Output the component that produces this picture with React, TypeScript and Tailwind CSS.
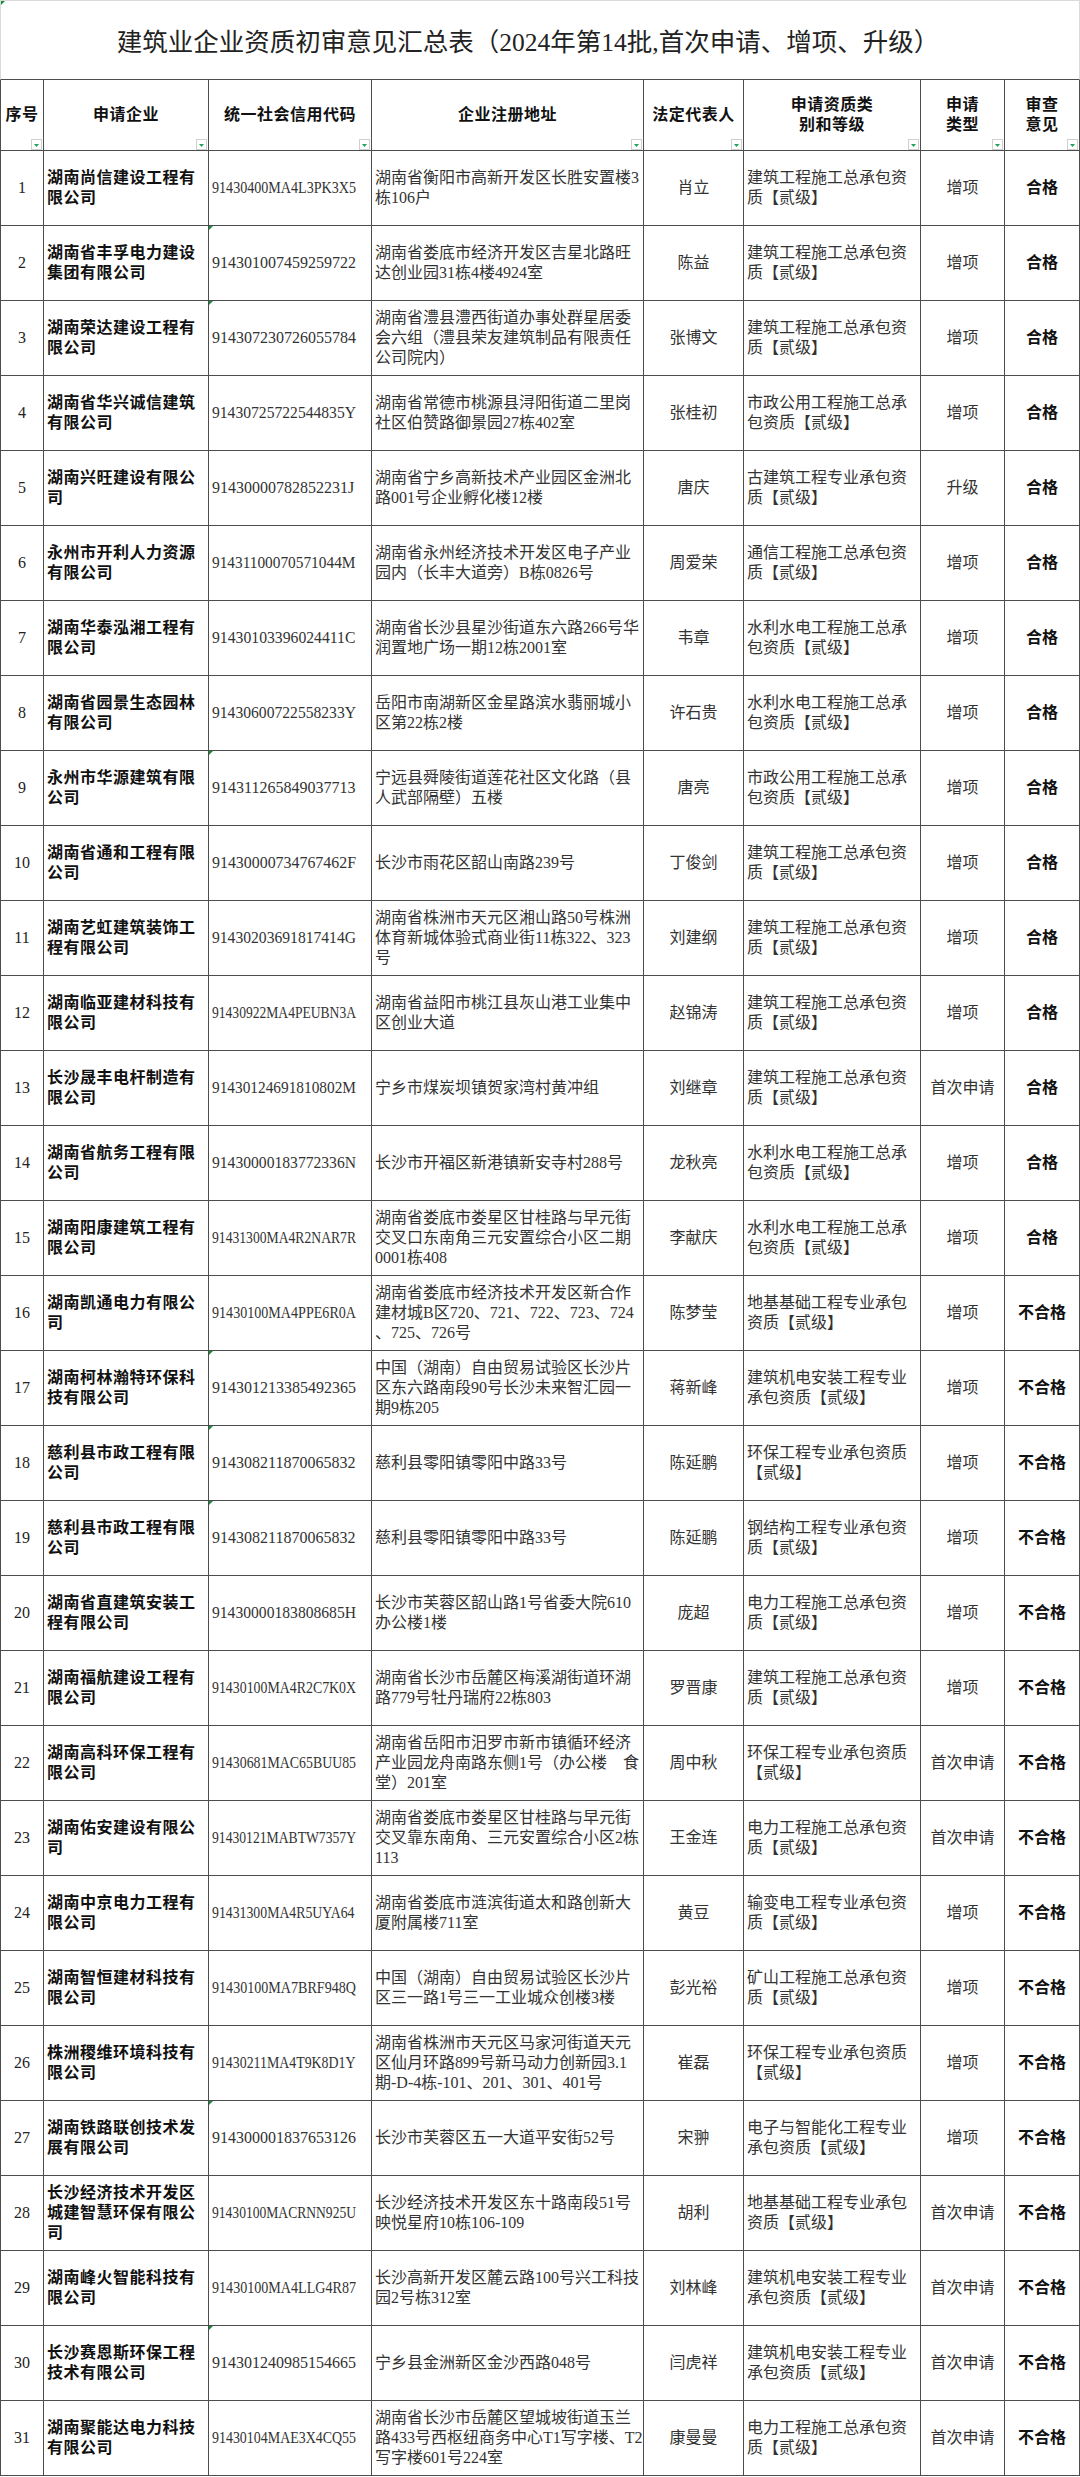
import React from "react";

type Row = {
  name: string;
  code: string;
  addr: string;
  rep: string;
  qual: string;
  type: string;
  result: string;
};

// lines are split on "|" so wrapping matches the sheet
const rows: Row[] = [
  { name: "湖南尚信建设工程有|限公司", code: "91430400MA4L3PK3X5", addr: "湖南省衡阳市高新开发区长胜安置楼3|栋106户", rep: "肖立", qual: "建筑工程施工总承包资|质【贰级】", type: "增项", result: "合格" },
  { name: "湖南省丰孚电力建设|集团有限公司", code: "914301007459259722", addr: "湖南省娄底市经济开发区吉星北路旺|达创业园31栋4楼4924室", rep: "陈益", qual: "建筑工程施工总承包资|质【贰级】", type: "增项", result: "合格" },
  { name: "湖南荣达建设工程有|限公司", code: "914307230726055784", addr: "湖南省澧县澧西街道办事处群星居委|会六组（澧县荣友建筑制品有限责任|公司院内）", rep: "张博文", qual: "建筑工程施工总承包资|质【贰级】", type: "增项", result: "合格" },
  { name: "湖南省华兴诚信建筑|有限公司", code: "91430725722544835Y", addr: "湖南省常德市桃源县浔阳街道二里岗|社区伯赞路御景园27栋402室", rep: "张桂初", qual: "市政公用工程施工总承|包资质【贰级】", type: "增项", result: "合格" },
  { name: "湖南兴旺建设有限公|司", code: "91430000782852231J", addr: "湖南省宁乡高新技术产业园区金洲北|路001号企业孵化楼12楼", rep: "唐庆", qual: "古建筑工程专业承包资|质【贰级】", type: "升级", result: "合格" },
  { name: "永州市开利人力资源|有限公司", code: "91431100070571044M", addr: "湖南省永州经济技术开发区电子产业|园内（长丰大道旁）B栋0826号", rep: "周爱荣", qual: "通信工程施工总承包资|质【贰级】", type: "增项", result: "合格" },
  { name: "湖南华泰泓湘工程有|限公司", code: "91430103396024411C", addr: "湖南省长沙县星沙街道东六路266号华|润置地广场一期12栋2001室", rep: "韦章", qual: "水利水电工程施工总承|包资质【贰级】", type: "增项", result: "合格" },
  { name: "湖南省园景生态园林|有限公司", code: "91430600722558233Y", addr: "岳阳市南湖新区金星路滨水翡丽城小|区第22栋2楼", rep: "许石贵", qual: "水利水电工程施工总承|包资质【贰级】", type: "增项", result: "合格" },
  { name: "永州市华源建筑有限|公司", code: "914311265849037713", addr: "宁远县舜陵街道莲花社区文化路（县|人武部隔壁）五楼", rep: "唐亮", qual: "市政公用工程施工总承|包资质【贰级】", type: "增项", result: "合格" },
  { name: "湖南省通和工程有限|公司", code: "91430000734767462F", addr: "长沙市雨花区韶山南路239号", rep: "丁俊剑", qual: "建筑工程施工总承包资|质【贰级】", type: "增项", result: "合格" },
  { name: "湖南艺虹建筑装饰工|程有限公司", code: "91430203691817414G", addr: "湖南省株洲市天元区湘山路50号株洲|体育新城体验式商业街11栋322、323|号", rep: "刘建纲", qual: "建筑工程施工总承包资|质【贰级】", type: "增项", result: "合格" },
  { name: "湖南临亚建材科技有|限公司", code: "91430922MA4PEUBN3A", addr: "湖南省益阳市桃江县灰山港工业集中|区创业大道", rep: "赵锦涛", qual: "建筑工程施工总承包资|质【贰级】", type: "增项", result: "合格" },
  { name: "长沙晟丰电杆制造有|限公司", code: "91430124691810802M", addr: "宁乡市煤炭坝镇贺家湾村黄冲组", rep: "刘继章", qual: "建筑工程施工总承包资|质【贰级】", type: "首次申请", result: "合格" },
  { name: "湖南省航务工程有限|公司", code: "91430000183772336N", addr: "长沙市开福区新港镇新安寺村288号", rep: "龙秋亮", qual: "水利水电工程施工总承|包资质【贰级】", type: "增项", result: "合格" },
  { name: "湖南阳康建筑工程有|限公司", code: "91431300MA4R2NAR7R", addr: "湖南省娄底市娄星区甘桂路与早元街|交叉口东南角三元安置综合小区二期|0001栋408", rep: "李献庆", qual: "水利水电工程施工总承|包资质【贰级】", type: "增项", result: "合格" },
  { name: "湖南凯通电力有限公|司", code: "91430100MA4PPE6R0A", addr: "湖南省娄底市经济技术开发区新合作|建材城B区720、721、722、723、724|、725、726号", rep: "陈梦莹", qual: "地基基础工程专业承包|资质【贰级】", type: "增项", result: "不合格" },
  { name: "湖南柯林瀚特环保科|技有限公司", code: "914301213385492365", addr: "中国（湖南）自由贸易试验区长沙片|区东六路南段90号长沙未来智汇园一|期9栋205", rep: "蒋新峰", qual: "建筑机电安装工程专业|承包资质【贰级】", type: "增项", result: "不合格" },
  { name: "慈利县市政工程有限|公司", code: "914308211870065832", addr: "慈利县零阳镇零阳中路33号", rep: "陈延鹏", qual: "环保工程专业承包资质|【贰级】", type: "增项", result: "不合格" },
  { name: "慈利县市政工程有限|公司", code: "914308211870065832", addr: "慈利县零阳镇零阳中路33号", rep: "陈延鹏", qual: "钢结构工程专业承包资|质【贰级】", type: "增项", result: "不合格" },
  { name: "湖南省直建筑安装工|程有限公司", code: "91430000183808685H", addr: "长沙市芙蓉区韶山路1号省委大院610|办公楼1楼", rep: "庞超", qual: "电力工程施工总承包资|质【贰级】", type: "增项", result: "不合格" },
  { name: "湖南福航建设工程有|限公司", code: "91430100MA4R2C7K0X", addr: "湖南省长沙市岳麓区梅溪湖街道环湖|路779号牡丹瑞府22栋803", rep: "罗晋康", qual: "建筑工程施工总承包资|质【贰级】", type: "增项", result: "不合格" },
  { name: "湖南高科环保工程有|限公司", code: "91430681MAC65BUU85", addr: "湖南省岳阳市汨罗市新市镇循环经济|产业园龙舟南路东侧1号（办公楼\u3000食|堂）201室", rep: "周中秋", qual: "环保工程专业承包资质|【贰级】", type: "首次申请", result: "不合格" },
  { name: "湖南佑安建设有限公|司", code: "91430121MABTW7357Y", addr: "湖南省娄底市娄星区甘桂路与早元街|交叉靠东南角、三元安置综合小区2栋|113", rep: "王金连", qual: "电力工程施工总承包资|质【贰级】", type: "首次申请", result: "不合格" },
  { name: "湖南中京电力工程有|限公司", code: "91431300MA4R5UYA64", addr: "湖南省娄底市涟滨街道太和路创新大|厦附属楼711室", rep: "黄豆", qual: "输变电工程专业承包资|质【贰级】", type: "增项", result: "不合格" },
  { name: "湖南智恒建材科技有|限公司", code: "91430100MA7BRF948Q", addr: "中国（湖南）自由贸易试验区长沙片|区三一路1号三一工业城众创楼3楼", rep: "彭光裕", qual: "矿山工程施工总承包资|质【贰级】", type: "增项", result: "不合格" },
  { name: "株洲稷维环境科技有|限公司", code: "91430211MA4T9K8D1Y", addr: "湖南省株洲市天元区马家河街道天元|区仙月环路899号新马动力创新园3.1|期-D-4栋-101、201、301、401号", rep: "崔磊", qual: "环保工程专业承包资质|【贰级】", type: "增项", result: "不合格" },
  { name: "湖南铁路联创技术发|展有限公司", code: "914300001837653126", addr: "长沙市芙蓉区五一大道平安街52号", rep: "宋翀", qual: "电子与智能化工程专业|承包资质【贰级】", type: "增项", result: "不合格" },
  { name: "长沙经济技术开发区|城建智慧环保有限公|司", code: "91430100MACRNN925U", addr: "长沙经济技术开发区东十路南段51号|映悦星府10栋106-109", rep: "胡利", qual: "地基基础工程专业承包|资质【贰级】", type: "首次申请", result: "不合格" },
  { name: "湖南峰火智能科技有|限公司", code: "91430100MA4LLG4R87", addr: "长沙高新开发区麓云路100号兴工科技|园2号栋312室", rep: "刘林峰", qual: "建筑机电安装工程专业|承包资质【贰级】", type: "首次申请", result: "不合格" },
  { name: "长沙赛恩斯环保工程|技术有限公司", code: "914301240985154665", addr: "宁乡县金洲新区金沙西路048号", rep: "闫虎祥", qual: "建筑机电安装工程专业|承包资质【贰级】", type: "首次申请", result: "不合格" },
  { name: "湖南聚能达电力科技|有限公司", code: "91430104MAE3X4CQ55", addr: "湖南省长沙市岳麓区望城坡街道玉兰|路433号西枢纽商务中心T1写字楼、T2|写字楼601号224室", rep: "康曼曼", qual: "电力工程施工总承包资|质【贰级】", type: "首次申请", result: "不合格" },
];

const cols = "grid grid-cols-[44px_165px_163px_272px_100px_177px_84px_75px]";
const cell = "relative flex items-center border-r border-b border-[#4d4d4d] px-[3px] leading-[20px]";

// Times metrics, per 1000 em, used to squeeze codes into the sheet's 8px-per-char grid
const upper: Record<string, number> = {
  A: 722, B: 667, C: 667, D: 722, E: 611, F: 556, G: 722, H: 722, I: 333, J: 389, K: 722, L: 611, M: 889,
  N: 722, O: 722, P: 556, Q: 722, R: 667, S: 556, T: 611, U: 722, V: 722, W: 944, X: 722, Y: 722, Z: 611,
};

function codeScale(code: string) {
  const w = code.split("").reduce((s, c) => s + (upper[c] ?? 500), 0) * 0.016;
  return Math.min(1, (code.length * 8) / w);
}

function Lines({ text }: { text: string }) {
  return (
    <div>
      {text.split("|").map((l, i) => (
        <div key={i} className="whitespace-pre">
          {l}
        </div>
      ))}
    </div>
  );
}

function FilterBtn() {
  return (
    <span className="absolute right-[1px] bottom-0 flex h-[11px] w-[11px] items-end justify-center border border-[#cfcfcf] bg-white pb-[2px]">
      <svg width="5" height="3" viewBox="0 0 5 3">
        <path d="M0 0H5L2.5 3Z" fill="#1fa35a" />
      </svg>
    </span>
  );
}

function TextMark() {
  return (
    <svg className="absolute left-0 top-0" width="4" height="4" viewBox="0 0 4 4">
      <path d="M0 0H4L0 4Z" fill="#1c8a3c" />
    </svg>
  );
}

const headers = ["序号", "申请企业", "统一社会信用代码", "企业注册地址", "法定代表人", "申请资质类|别和等级", "申请|类型", "审查|意见"];

export default function App() {
  return (
    <div
      className="w-[1080px] bg-white text-[16px] text-[#333]"
      style={{ fontFamily: "'Liberation Serif', 'Noto Sans CJK SC', serif" }}
    >
      <div className="relative flex h-[80px] items-center justify-center border-x border-t border-b border-x-[#dadada] border-t-[#dadada] border-b-[#4d4d4d] pt-[6px] pr-[24px] text-[25.5px] text-[#222]">
        <TextMark />
        建筑业企业资质初审意见汇总表（2024年第14批,首次申请、增项、升级）
      </div>

      <div className={`${cols} h-[71px] font-bold tracking-[0.5px] text-[#111]`}>
        {headers.map((h, i) => (
          <div key={i} className={`${cell} justify-center text-center ${i === 0 ? "border-l" : ""}`}>
            <Lines text={h} />
            <FilterBtn />
          </div>
        ))}
      </div>

      {rows.map((r, i) => (
        <div key={i} className={`${cols} h-[75px]`}>
          <div className={`${cell} border-l justify-center text-[#222]`}>{i + 1}</div>
          <div className={`${cell} font-bold tracking-[0.5px] text-[#111]`}>
            <Lines text={r.name} />
          </div>
          <div className={`${cell} overflow-hidden`}>
            {/^\d+$/.test(r.code) && <TextMark />}
            <span
              className="inline-block origin-left whitespace-nowrap"
              style={{ transform: `scaleX(${codeScale(r.code)})` }}
            >
              {r.code}
            </span>
          </div>
          <div className={cell}>
            <Lines text={r.addr} />
          </div>
          <div className={`${cell} justify-center`}>{r.rep}</div>
          <div className={cell}>
            <Lines text={r.qual} />
          </div>
          <div className={`${cell} justify-center`}>{r.type}</div>
          <div className={`${cell} justify-center font-bold text-[#111]`}>{r.result}</div>
        </div>
      ))}
    </div>
  );
}
